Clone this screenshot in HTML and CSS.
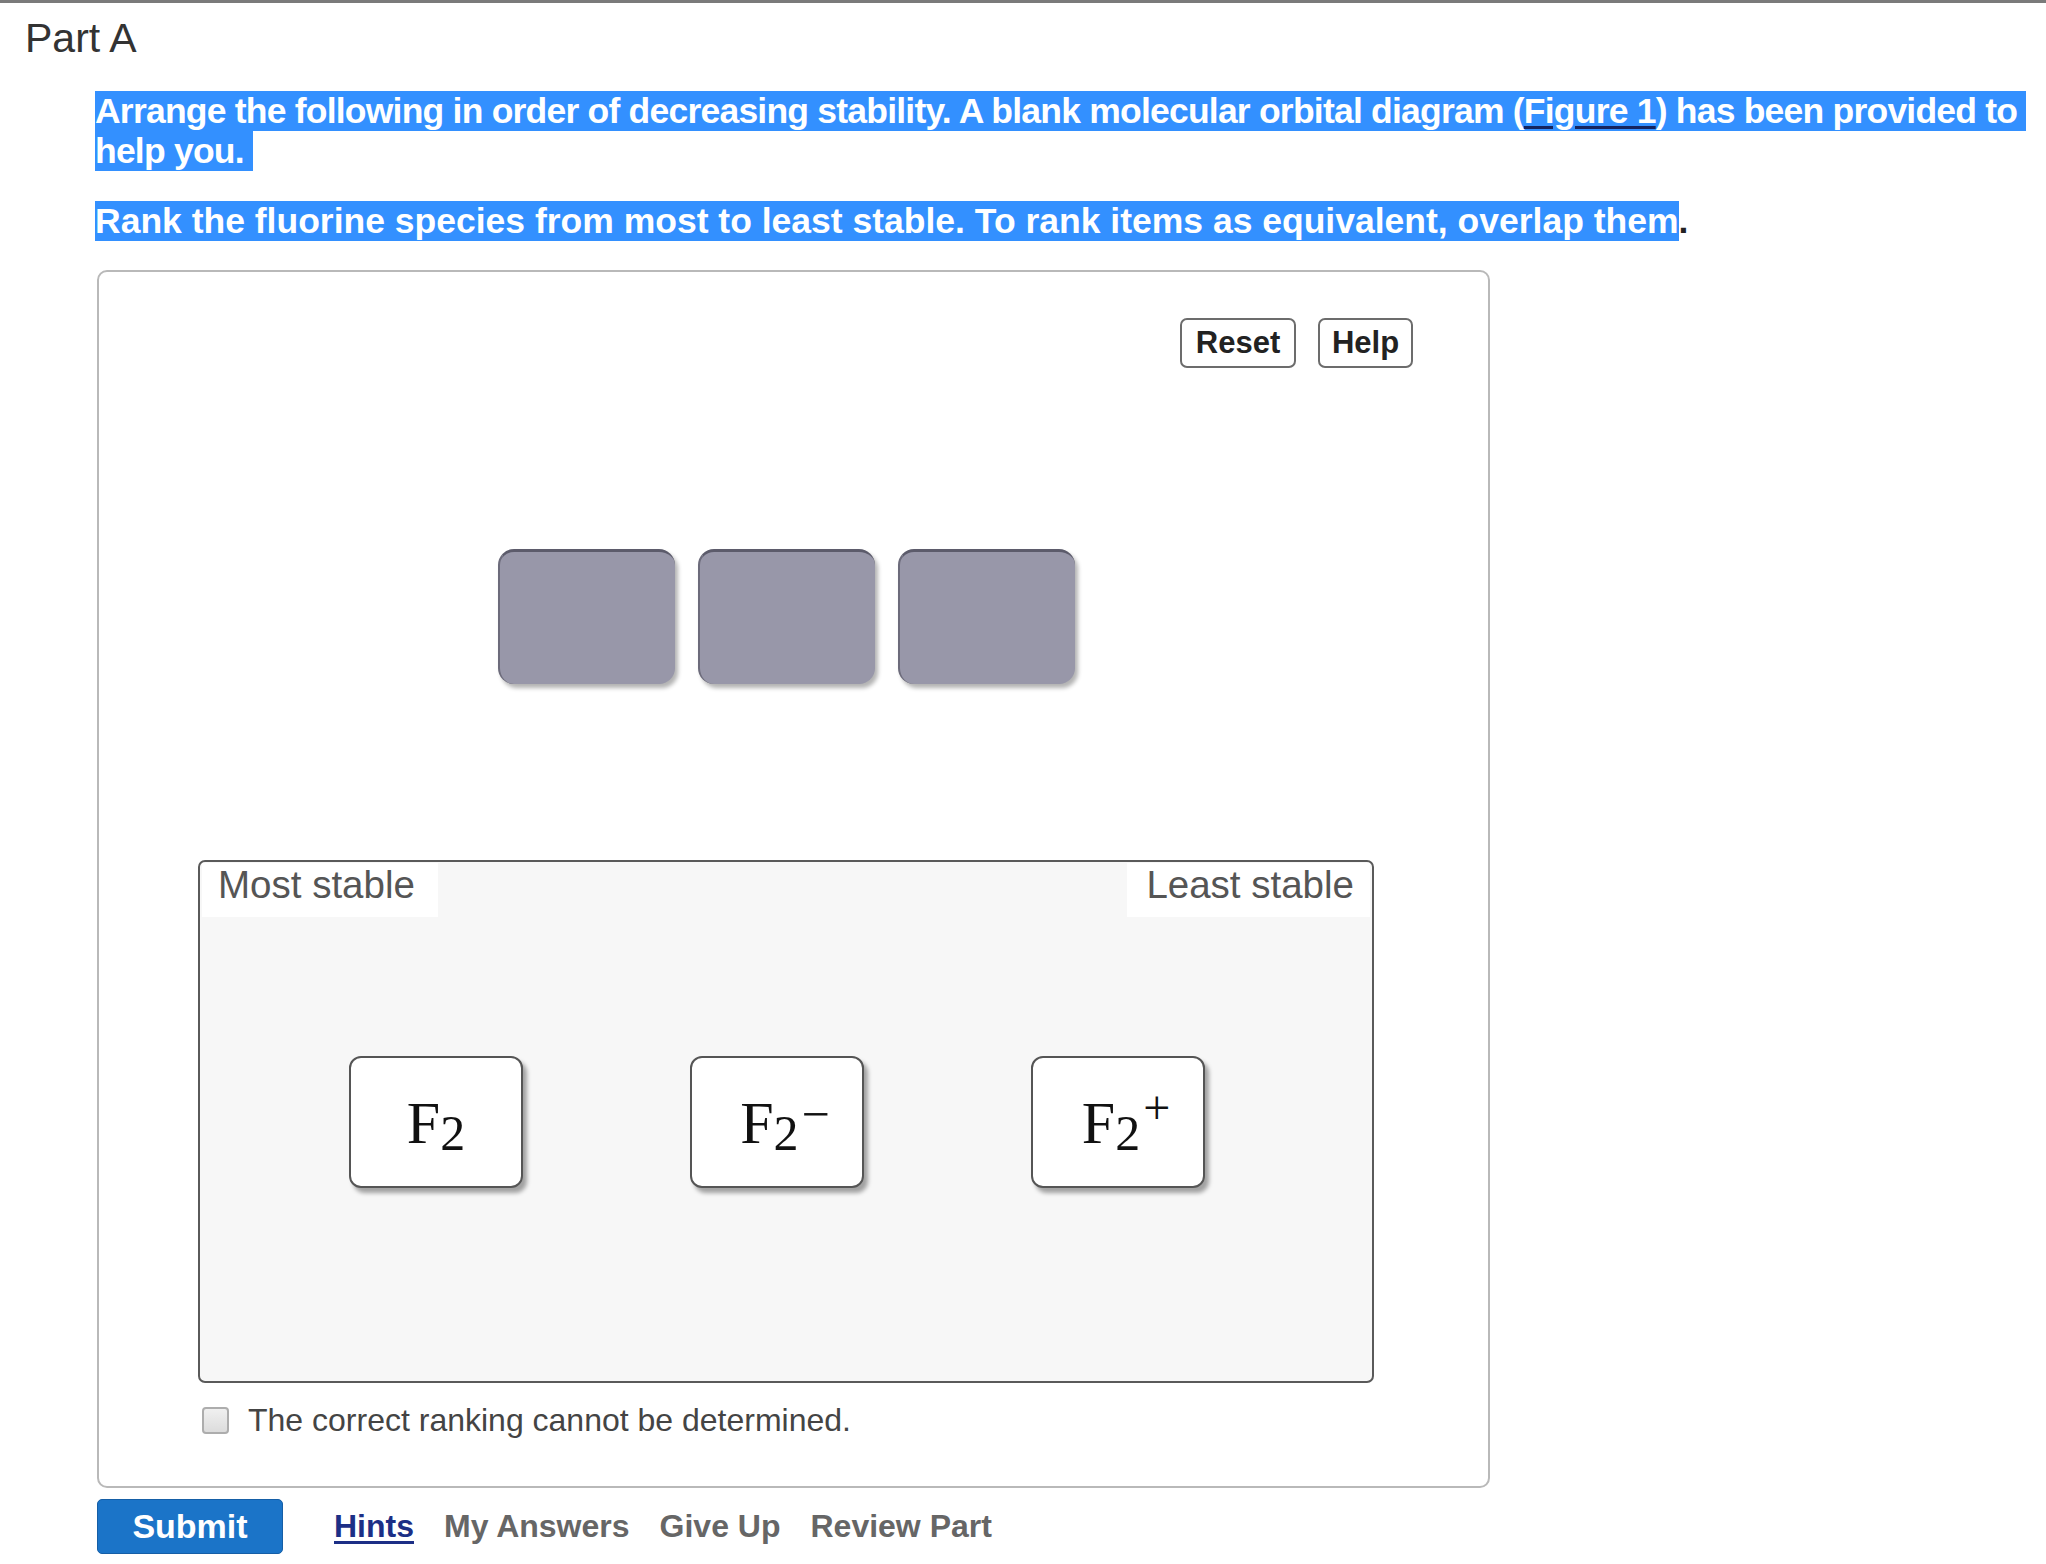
FILE: index.html
```html
<!DOCTYPE html>
<html>
<head>
	<title>Part A - Ranking</title>
	<link rel="stylesheet" href="styles.css">
</head>
<body>
	<div class="topline"></div>
	<h2 class="part-title">Part A</h2>
	<div class="question">
		<p class="prompt intro"><span class="sel">Arrange the following in order of decreasing stability. A blank molecular orbital diagram (<a class="fig-link">Figure 1</a>) has been provided to&nbsp;</span><br><span class="sel">help you.&nbsp;</span></p>
		<p class="prompt task"><span class="sel">Rank the fluorine species from most to least stable. To rank items as equivalent, overlap them</span>.</p>
	</div>
	<div class="ranking-box">
		<div class="tools">
			<button class="tool-btn reset">Reset</button>
			<button class="tool-btn help">Help</button>
		</div>
		<div class="slots">
			<div class="slot"></div>
			<div class="slot"></div>
			<div class="slot"></div>
		</div>
		<div class="rank-area">
			<span class="label label-most">Most stable</span>
			<span class="label label-least">Least stable</span>
			<div class="item">F<sub>2</sub></div>
			<div class="item">F<sub>2</sub><sup class="minus">&minus;</sup></div>
			<div class="item">F<sub>2</sub><sup>+</sup></div>
		</div>
		<label class="cannot"><span class="checkbox"></span>The correct ranking cannot be determined.</label>
	</div>
	<div class="actions">
		<button class="submit">Submit</button>
		<a class="link hints">Hints</a>
		<a class="link">My Answers</a>
		<a class="link">Give Up</a>
		<a class="link">Review Part</a>
	</div>
</body>
</html>
```

FILE: styles.css
```css
body{
	margin: 0;
	width: 2046px;
	font-family: 'Liberation Sans', Arial, sans-serif;
	color: #333;
	background: white;
}
.topline{
	height: 3px;
	background: #7a7a7a;
}
.part-title{
	margin: 12px 0 0 25px;
	font-size: 41px;
	line-height: 46px;
	font-weight: normal;
	color: #333;
}
.question{
	margin-left: 95px;
	margin-top: 30px;
}
.prompt{
	margin: 0 0 30px 0;
	font-size: 35.5px;
	line-height: 40px;
	font-weight: bold;
	white-space: nowrap;
	color: #222;
}
.intro{
	letter-spacing: -0.78px;
}
.task{
	letter-spacing: 0;
}
.sel{
	background: #3390ff;
	color: white;
}
.fig-link{
	text-decoration: underline;
	text-decoration-color: #15245e;
	text-decoration-thickness: 3px;
	text-underline-offset: 3px;
}

.ranking-box{
	box-sizing: border-box;
	width: 1393px;
	margin: -1px 0 0 97px;
	border: 2px solid #b9b9b9;
	border-radius: 10px;
	padding: 46px 114px 52px 99px;
}
.tools{
	display: flex;
	justify-content: flex-end;
	gap: 22px;
	margin-right: -39px;
}
.tool-btn{
	height: 50px;
	padding: 0;
	background: white;
	border: 2px solid #6c6c6c;
	border-radius: 7px;
	font-family: 'Liberation Sans', Arial, sans-serif;
	font-weight: bold;
	font-size: 31px;
	color: #222;
}
.reset{
	width: 116px;
}
.help{
	width: 95px;
}
.slots{
	display: flex;
	justify-content: center;
	gap: 23px;
	margin-top: 181px;
}
.slot{
	box-sizing: border-box;
	width: 177px;
	height: 135px;
	background: #9897a9;
	border-top: 3px solid #5c5b6b;
	border-left: 2px solid #6c6b7b;
	border-radius: 16px;
	box-shadow: 3px 4px 4px rgba(0, 0, 0, 0.3);
}

.rank-area{
	position: relative;
	box-sizing: border-box;
	height: 523px;
	margin-top: 176px;
	padding-right: 18px;
	background: #f7f7f7;
	border: 2px solid #5a5a5a;
	border-radius: 7px;
	display: flex;
	justify-content: center;
	align-items: center;
	gap: 167px;
}
.label{
	position: absolute;
	top: 1px;
	box-sizing: border-box;
	width: 236px;
	height: 54px;
	padding: 0 16px;
	background: white;
	font-size: 38.5px;
	line-height: 44px;
	color: #555;
}
.label-most{
	left: 2px;
}
.label-least{
	right: 2px;
	width: 243px;
	text-align: right;
}
.item{
	box-sizing: border-box;
	width: 174px;
	height: 132px;
	background: white;
	border: 2px solid #555;
	border-radius: 12px;
	box-shadow: 4px 5px 4px rgba(0, 0, 0, 0.35);
	display: flex;
	justify-content: center;
	align-items: center;
	padding-top: 4px;
	font-family: 'Liberation Serif', 'Times New Roman', serif;
	font-size: 60px;
	color: #111;
}
.item sub{
	font-size: 50px;
	position: relative;
	top: 9px;
	vertical-align: baseline;
}
.item sup{
	font-size: 48px;
	position: relative;
	top: -16px;
	margin-left: 3px;
	margin-right: -16px;
	vertical-align: baseline;
}
.item sup.minus{
	font-size: 50px;
	top: -10px;
}

.cannot{
	display: flex;
	align-items: center;
	margin-top: 24px;
	font-size: 32px;
	line-height: 27px;
	color: #444;
}
.checkbox{
	box-sizing: border-box;
	width: 27px;
	height: 27px;
	margin: 0 19px 0 4px;
	border: 2px solid #adadad;
	border-radius: 4px;
	background: linear-gradient(#f0f0f0, #dcdcdc);
}

.actions{
	display: flex;
	align-items: center;
	margin: 11px 0 0 97px;
}
.submit{
	width: 186px;
	height: 55px;
	margin-right: 51px;
	background: #1b74c8;
	border: 1px solid #155ea6;
	border-radius: 5px;
	color: white;
	font-family: 'Liberation Sans', Arial, sans-serif;
	font-weight: bold;
	font-size: 34px;
}
.link{
	margin-right: 30px;
	font-size: 32px;
	font-weight: bold;
	color: #666;
}
.hints{
	color: #1c2f86;
	text-decoration: underline;
	text-underline-offset: 4px;
}
```
